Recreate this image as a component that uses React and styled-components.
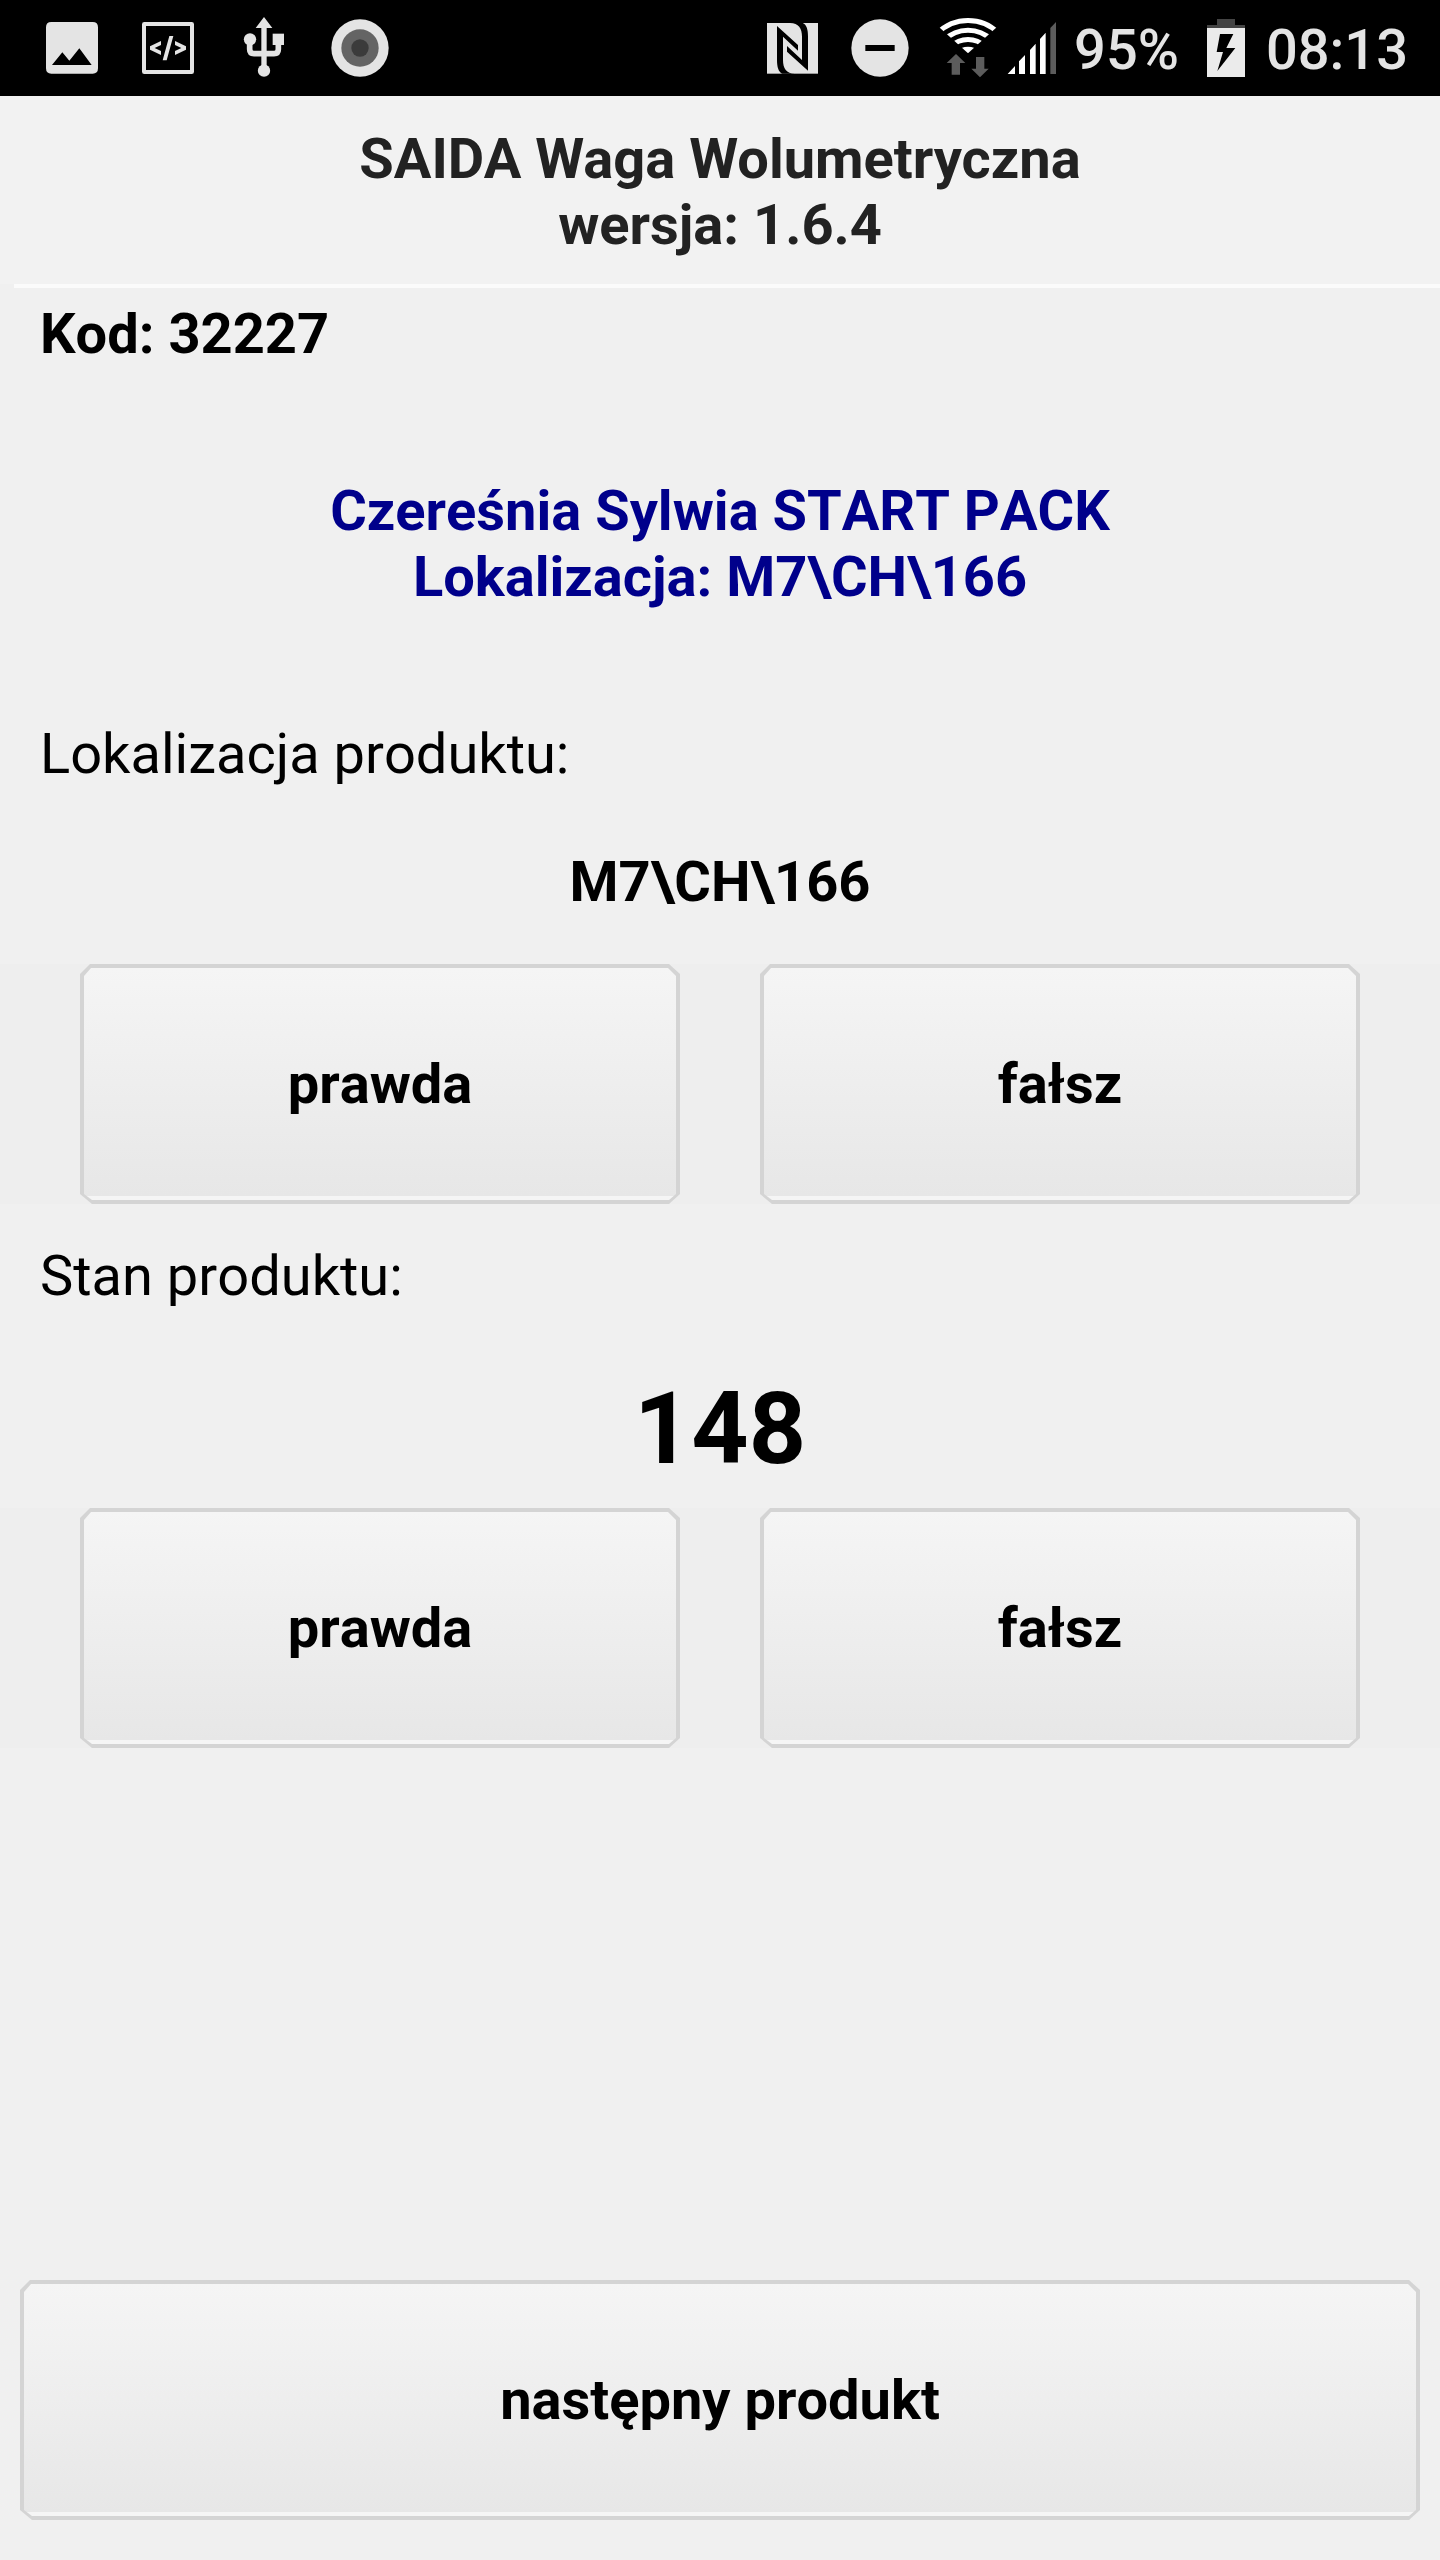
import React, { useState } from "react";
import styled, { createGlobalStyle } from "styled-components";

const GlobalStyle = createGlobalStyle`
  * {
    box-sizing: border-box;
  }

  body {
    margin: 0;
    background: #f0f0f0;
    font-family: Roboto, "Liberation Sans", sans-serif;
  }
`;

// Styled Components
const Screen = styled.div`
  width: 1440px;
  height: 2560px;
  display: flex;
  flex-direction: column;
  background: #f0f0f0;
  color: #000;
  font-size: 56px;
  line-height: 66px;
  overflow: hidden;
`;

const StatusBar = styled.div`
  height: 96px;
  flex-shrink: 0;
  display: flex;
  justify-content: space-between;
  padding: 0 32px 0 24px;
  background: #000;
  color: #e4e4e4;
  font-weight: 500;
`;

const StatusGroup = styled.div`
  display: flex;
  align-items: center;
`;

const StatusIcon = styled.svg`
  display: block;
  width: ${({ $width }) => $width}px;
  height: 96px;
  fill: #e4e4e4;
`;

const StatusText = styled.span`
  width: ${({ $width }) => $width}px;
  padding-top: 4px;
  text-align: right;
  white-space: nowrap;
`;

const Header = styled.header`
  height: 188px;
  flex-shrink: 0;
  padding-top: 30px;
  background: #f2f2f2;
  color: #222;
  font-weight: 700;
  text-align: center;
`;

const Divider = styled.div`
  height: 4px;
  flex-shrink: 0;
  margin-left: 14px;
  background: #fbfbfb;
`;

const Content = styled.main`
  flex: 1;
  display: flex;
  flex-direction: column;
  padding: 13px 0 40px;
  font-kerning: none;
`;

const Code = styled.div`
  padding-left: 40px;
  font-weight: 700;
`;

const Product = styled.div`
  margin: 111px 0;
  color: #00008b;
  font-weight: 700;
  text-align: center;
`;

const Label = styled.div`
  padding-left: 40px;
`;

const Location = styled.div`
  margin: 62px 0 49px;
  font-weight: 700;
  text-align: center;
`;

const Stock = styled.div`
  margin: 61px 0 21px;
  font-size: 100px;
  font-weight: 700;
  line-height: 117px;
  text-align: center;
`;

const AnswerRow = styled.div`
  display: grid;
  grid-template-columns: 1fr 1fr;
  gap: 80px;
  padding: 0 80px;
  margin-bottom: ${({ $gap }) => $gap || 0}px;
  background: #eeeeee;
`;

const Footer = styled.footer`
  display: flex;
  margin-top: auto;
  padding: 0 20px;
`;

const ButtonFrame = styled.button`
  flex: 1;
  height: 240px;
  display: flex;
  padding: 4px;
  border: none;
  background: #d4d4d4;
  color: #000;
  font: inherit;
  font-kerning: inherit;
  font-weight: 700;
  cursor: pointer;
  clip-path: polygon(
    10px 0, calc(100% - 11px) 0, 100% 10px, 100% calc(100% - 10px),
    calc(100% - 11px) 100%, 12px 100%, 0 calc(100% - 10px), 0 10px
  );
`;

const ButtonFace = styled.span`
  flex: 1;
  display: flex;
  align-items: center;
  justify-content: center;
  padding-top: 4px;
  border-bottom: 4px solid #f5f5f5;
  background: linear-gradient(180deg, #f5f5f5, #e7e7e7);
  clip-path: polygon(
    7px 0, calc(100% - 8px) 0, 100% 8px, 100% calc(100% - 6px),
    calc(100% - 7px) 100%, 8px 100%, 0 calc(100% - 6px), 0 8px
  );
`;

function Button({ children, onClick }) {
  return (
    <ButtonFrame type="button" onClick={onClick}>
      <ButtonFace>{children}</ButtonFace>
    </ButtonFrame>
  );
}

function Answer({ onAnswer, gap }) {
  return (
    <AnswerRow $gap={gap}>
      <Button onClick={() => onAnswer(true)}>prawda</Button>
      <Button onClick={() => onAnswer(false)}>fałsz</Button>
    </AnswerRow>
  );
}

function Status() {
  return (
    <StatusBar>
      <StatusGroup>
        <StatusIcon $width={96} viewBox="72 0 288 288">
          <path
            fillRule="evenodd"
            d="M154 66h124q16 0 16 16v123q0 16-16 16H154q-16 0-16-16V82q0-16 16-16zM156 195h119l-37-50-30 37-21-25z"
          />
        </StatusIcon>
        <StatusIcon $width={96} viewBox="360 0 288 288">
          <rect x="432" y="72" width="144" height="144" rx="1" fill="none" stroke="#e4e4e4" strokeWidth="12" />
          <path d="M450 139l33-16v12l-19 9 19 9v12l-33-16zM558 139l-33-16v12l19 9-19 9v12l33-16zM508 108h12l-20 73h-12z" />
        </StatusIcon>
        <StatusIcon $width={96} viewBox="648 0 288 288">
          <path d="M792 51l25 33h-17v120h-16V84h-17z" />
          <circle cx="792" cy="212" r="18.500" />
          <circle cx="750" cy="118" r="18.500" />
          <rect x="818" y="101" width="34" height="34" />
          <path
            d="M749 125v23q0 13 13 13h60q13 0 13-13v-23"
            fill="none"
            stroke="#e4e4e4"
            strokeWidth="17"
          />
        </StatusIcon>
        <StatusIcon $width={96} viewBox="936 0 288 288">
          <circle cx="1080" cy="144" r="86" />
          <circle cx="1080" cy="144" r="56" fill="#646464" />
          <circle cx="1080" cy="144" r="26" fill="#3b3b3b" />
        </StatusIcon>
      </StatusGroup>

      <StatusGroup>
        {/* NFC */}
        <StatusIcon $width={96} viewBox="0 0 288 288">
          <rect x="81" y="69" width="153" height="152" />
          <path
            fill="#000"
            d="M111 78l63 57v17l-45-42v70c0 25 10 41 36 41h-38c-12-5-16-20-16-41zM204 212l-63-57v-17l45 42v-70c0-25-10-41-36-41h38c12 5 16 20 16 41z"
          />
        </StatusIcon>
        <StatusIcon $width={88} viewBox="288 0 264 288">
          <circle cx="420" cy="144" r="86" />
          <rect x="376" y="135" width="88" height="18" fill="#000" />
        </StatusIcon>
        {/* Wi-Fi */}
        <StatusIcon $width={76} viewBox="552 0 228 288">
          <clipPath id="fan">
            <path d="M684 160l-108-98V30h216v32z" />
          </clipPath>
          <g clipPath="url(#fan)" fill="none" stroke="#fff" strokeWidth="15">
            <circle cx="684" cy="191" r="129.500" />
            <circle cx="684" cy="191" r="100.500" />
            <circle cx="684" cy="191" r="72.500" />
            <circle cx="684" cy="191" r="51" fill="#fff" stroke="none" />
          </g>
          <path
            fill="#5c5c5c"
            d="M648 162l28 27h-16v35h-25v-35h-15zM720 232l-26-26h14v-35h25v35h13z"
          />
        </StatusIcon>
        <StatusIcon $width={60} viewBox="780 0 180 288">
          <path
            fill="#fff"
            d="M803 222l22-24v24zM837 184l18-19v57h-18zM870 150l17-19v91h-17zM900 117l17-19v124h-17z"
          />
          <path fill="#5c5c5c" d="M931 84l17-18v156h-17z" />
        </StatusIcon>
        <StatusText $width={119}>95%</StatusText>
        {/* Battery */}
        <StatusIcon $width={83} viewBox="357 0 249 288">
          <path fill="#444" d="M471 57h54v18h30v9H441v-9h30z" />
          <path fill="#ebebeb" d="M441 84h114v147H441z" />
          <path fill="#000" d="M480 102h40l-21 42h27l-54 69 17-57h-19z" />
        </StatusIcon>
        <StatusText $width={146}>08:13</StatusText>
      </StatusGroup>
    </StatusBar>
  );
}

export default function App() {
  const [, setAnswers] = useState({});

  const save = (field) => (value) =>
    setAnswers((prev) => ({ ...prev, [field]: value }));

  return (
    <>
      <GlobalStyle />
      <Screen>
        <Status />
        <Header>
          SAIDA Waga Wolumetryczna
          <br />
          wersja: 1.6.4
        </Header>
        <Divider />
        <Content>
          <Code>Kod: 32227</Code>
          <Product>
            Czereśnia Sylwia START PACK
            <br />
            Lokalizacja: M7\CH\166
          </Product>

          <Label>Lokalizacja produktu:</Label>
          <Location>M7\CH\166</Location>
          <Answer onAnswer={save("location")} gap={39} />

          <Label>Stan produktu:</Label>
          <Stock>148</Stock>
          <Answer onAnswer={save("stock")} />

          <Footer>
            <Button onClick={() => setAnswers({})}>następny produkt</Button>
          </Footer>
        </Content>
      </Screen>
    </>
  );
}
